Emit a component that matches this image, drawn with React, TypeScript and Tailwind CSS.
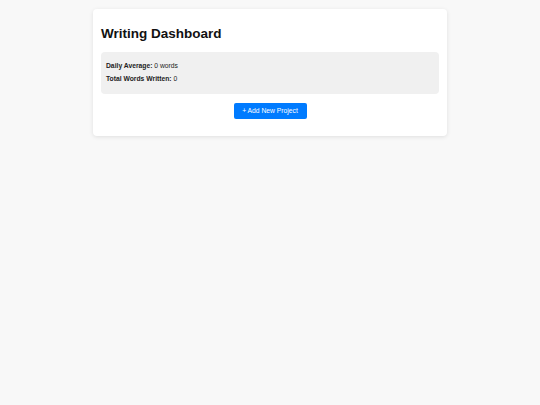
export default function App() {
  return (
    <div
      className="min-h-screen w-full bg-[#f8f8f8] pt-[9px]"
      style={{ fontFamily: '"Liberation Sans", Arial, sans-serif' }}
    >
      <div className="mx-auto w-[354px] rounded-[4px] bg-white px-[8px] pt-[17px] pb-[17px] shadow-[0_1px_4px_rgba(0,0,0,0.1)]">
        <h1 className="text-[13.5px] leading-[15.5px] font-bold text-[#111]">Writing Dashboard</h1>

        <div className="mt-[10px] flex flex-col gap-[6px] rounded-[4px] bg-[#f0f0f0] px-[5px] pt-[10px] pb-[11px] text-[6.75px] leading-[7.8px] text-[#222]">
          <p>
            <span className="font-bold">Daily Average:</span> 0 words
          </p>
          <p>
            <span className="font-bold">Total Words Written:</span> 0
          </p>
        </div>

        <div className="mt-[9px] flex justify-center">
          <button className="h-[16px] w-[73px] rounded-[2px] bg-[#007bff] text-[6.75px] leading-none text-white">
            + Add New Project
          </button>
        </div>
      </div>
    </div>
  );
}
